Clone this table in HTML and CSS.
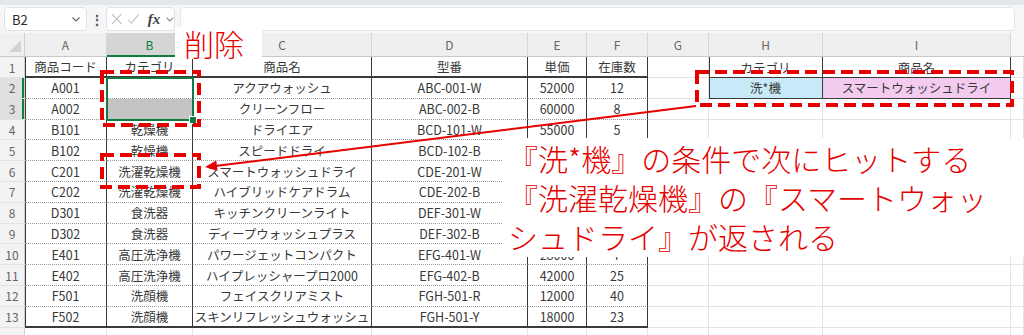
FILE: index.html
```html
<!DOCTYPE html>
<html lang="ja">
<head>
<meta charset="utf-8">
<title>XLOOKUP ワイルドカード</title>
<link rel="stylesheet" href="styles.css">
</head>
<body>
<div class="app">
  <div class="fbar">
    <div class="namebox">
      <span class="ref">B2</span>
      <svg class="chev" width="8" height="5" viewBox="0 0 8 5"><polyline points="0.5,0.5 4,4 7.5,0.5" fill="none" stroke="#666" stroke-width="1.1"/></svg>
    </div>
    <div class="dots">⋮</div>
    <div class="fxbox">
      <svg width="12" height="12" viewBox="0 0 12 12"><path d="M1 1 L11 11 M11 1 L1 11" stroke="#bdbdbd" stroke-width="1.1" fill="none"/></svg>
      <svg width="13" height="12" viewBox="0 0 13 12"><polyline points="1,6.5 4.5,10.5 12,1.5" stroke="#bdbdbd" stroke-width="1.1" fill="none"/></svg>
      <span class="fx">fx</span>
      <svg width="8" height="5" viewBox="0 0 8 5"><polyline points="0.5,0.5 4,4 7.5,0.5" fill="none" stroke="#888" stroke-width="1.1"/></svg>
    </div>
    <div class="finput"></div>
  </div>

  <div class="sheet">
    <div class="corner"><span class="tri"></span></div>
    <div class="ch">A</div><div class="ch sel">B</div><div class="ch">C</div><div class="ch">D</div><div class="ch">E</div><div class="ch">F</div><div class="ch">G</div><div class="ch">H</div><div class="ch">I</div><div class="ch end"></div>

    <div class="rh">1</div>
    <div class="t ta th">商品コード</div><div class="t th">カテゴリ</div><div class="t th">商品名</div><div class="t th">型番</div><div class="t th">単価</div><div class="t th">在庫数</div>
    <div class="c"></div><div class="t ta tb">カテゴリ</div><div class="t tb">商品名</div><div class="c"></div>

    <div class="rh sel">2</div>
    <div class="t ta">A001</div><div class="t"></div><div class="t">アクアウォッシュ</div><div class="t">ABC-001-W</div><div class="t">52000</div><div class="t">12</div>
    <div class="c"></div><div class="t ta tb blue">洗*機</div><div class="t tb pink">スマートウォッシュドライ</div><div class="c"></div>

    <div class="rh sel">3</div>
    <div class="t ta">A002</div><div class="t gray"></div><div class="t">クリーンフロー</div><div class="t">ABC-002-B</div><div class="t">60000</div><div class="t">8</div>
    <div class="c"></div><div class="c"></div><div class="c"></div><div class="c"></div>

    <div class="rh">4</div>
    <div class="t ta">B101</div><div class="t">乾燥機</div><div class="t">ドライエア</div><div class="t">BCD-101-W</div><div class="t">55000</div><div class="t">5</div>
    <div class="c"></div><div class="c"></div><div class="c"></div><div class="c"></div>

    <div class="rh">5</div>
    <div class="t ta">B102</div><div class="t">乾燥機</div><div class="t">スピードドライ</div><div class="t">BCD-102-B</div><div class="t"></div><div class="t"></div>
    <div class="c"></div><div class="c"></div><div class="c"></div><div class="c"></div>

    <div class="rh">6</div>
    <div class="t ta">C201</div><div class="t">洗濯乾燥機</div><div class="t">スマートウォッシュドライ</div><div class="t">CDE-201-W</div><div class="t"></div><div class="t"></div>
    <div class="c"></div><div class="c"></div><div class="c"></div><div class="c"></div>

    <div class="rh">7</div>
    <div class="t ta">C202</div><div class="t">洗濯乾燥機</div><div class="t">ハイブリッドケアドラム</div><div class="t">CDE-202-B</div><div class="t"></div><div class="t"></div>
    <div class="c"></div><div class="c"></div><div class="c"></div><div class="c"></div>

    <div class="rh">8</div>
    <div class="t ta">D301</div><div class="t">食洗器</div><div class="t">キッチンクリーンライト</div><div class="t">DEF-301-W</div><div class="t"></div><div class="t"></div>
    <div class="c"></div><div class="c"></div><div class="c"></div><div class="c"></div>

    <div class="rh">9</div>
    <div class="t ta">D302</div><div class="t">食洗器</div><div class="t">ディープウォッシュプラス</div><div class="t">DEF-302-B</div><div class="t"></div><div class="t"></div>
    <div class="c"></div><div class="c"></div><div class="c"></div><div class="c"></div>

    <div class="rh">10</div>
    <div class="t ta">E401</div><div class="t">高圧洗浄機</div><div class="t">パワージェットコンパクト</div><div class="t">EFG-401-W</div><div class="t">28000</div><div class="t">7</div>
    <div class="c"></div><div class="c"></div><div class="c"></div><div class="c"></div>

    <div class="rh">11</div>
    <div class="t ta">E402</div><div class="t">高圧洗浄機</div><div class="t">ハイプレッシャープロ2000</div><div class="t">EFG-402-B</div><div class="t">42000</div><div class="t">25</div>
    <div class="c"></div><div class="c"></div><div class="c"></div><div class="c"></div>

    <div class="rh">12</div>
    <div class="t ta">F501</div><div class="t">洗顔機</div><div class="t">フェイスクリアミスト</div><div class="t">FGH-501-R</div><div class="t">12000</div><div class="t">40</div>
    <div class="c"></div><div class="c"></div><div class="c"></div><div class="c"></div>

    <div class="rh">13</div>
    <div class="t ta tl">F502</div><div class="t tl">洗顔機</div><div class="t tl">スキンリフレッシュウォッシュ</div><div class="t tl">FGH-501-Y</div><div class="t tl">18000</div><div class="t tl">23</div>
    <div class="c"></div><div class="c"></div><div class="c"></div><div class="c"></div>

    <div class="rh"></div>
    <div class="c"></div><div class="c"></div><div class="c"></div><div class="c"></div><div class="c"></div><div class="c"></div>
    <div class="c"></div><div class="c"></div><div class="c"></div><div class="c"></div>
  </div>

  <div class="selbox"><span class="handle"></span></div>

  <div class="tag">削除</div>

  <div class="note">
    <p>『洗*機』の条件で次にヒットする</p>
    <p>『洗濯乾燥機』の『スマートウォッ</p>
    <p>シュドライ』が返される</p>
  </div>

  <svg class="marks" width="1024" height="335" viewBox="0 0 1024 335">
    <g fill="none" stroke="#e60000" stroke-width="4" stroke-dasharray="12 6">
      <rect x="102" y="72" width="97" height="53"/>
      <rect x="102" y="155" width="97" height="32"/>
      <rect x="697" y="72" width="315" height="33"/>
    </g>
    <line x1="696" y1="106" x2="215" y2="166" stroke="#e60000" stroke-width="2"/>
    <polygon points="205,167 217.5,171 216.3,160.5" fill="#e60000"/>
  </svg>
</div>
</body>
</html>
```

FILE: styles.css
```css
html, body {
  margin: 0;
  padding: 0;
  background: #ffffff;
}

body {
  width: 1024px;
  height: 335px;
  overflow: hidden;
  font-family: "Noto Sans CJK JP", "Noto Sans", sans-serif;
}

.app {
  position: relative;
  width: 1024px;
  height: 335px;
  overflow: hidden;
}

/* formula bar */
.fbar {
  height: 33px;
  box-sizing: border-box;
  padding: 7px 9px 0 4px;
  display: flex;
  align-items: flex-start;
  background: linear-gradient(#e4e7ea 0, #e4e7ea 5px, #f5f6f7 5px);
}

.namebox {
  width: 83px;
  height: 24px;
  box-sizing: border-box;
  background: #fff;
  border: 1px solid #e2e2e2;
  border-radius: 4px;
  display: flex;
  align-items: center;
  justify-content: space-between;
  padding: 0 6px 0 7px;
}

.ref {
  font-size: 13px;
  color: #2b2b2b;
}

.dots {
  width: 19px;
  height: 24px;
  display: flex;
  align-items: center;
  justify-content: center;
  font-size: 14px;
  color: #555;
  font-weight: bold;
}

.fxbox {
  width: 69px;
  height: 24px;
  box-sizing: border-box;
  background: #fff;
  border: 1px solid #e2e2e2;
  border-radius: 4px;
  display: flex;
  align-items: center;
  gap: 5px;
  padding: 0 0 0 4px;
}

.fx {
  font-family: "Liberation Serif", serif;
  font-style: italic;
  font-weight: bold;
  font-size: 15px;
  color: #444;
  margin: 0 1px 0 3px;
}

.finput {
  flex: 1;
  margin-left: 5px;
  height: 24px;
  background: #fff;
  border: 1px solid #e6e6e6;
  border-radius: 4px;
  box-sizing: border-box;
}

/* sheet grid */
.sheet {
  display: grid;
  grid-template-columns: 25px 82px 86px 179px 156px 59px 61px 61px 114px 188px 13px;
  grid-template-rows: 24px 21px repeat(12, 20.8px) 20px;
}

.corner {
  position: relative;
  background: #f0f0f0;
  border-right: 1px solid #d0d0d0;
  border-bottom: 1px solid #c8c8c8;
  box-sizing: border-box;
}

.tri {
  position: absolute;
  right: 3px;
  bottom: 4px;
  width: 0;
  height: 0;
  border-left: 12px solid transparent;
  border-bottom: 12px solid #d3d3d3;
}

.ch {
  background: #efefef;
  border-right: 1px solid #d6d6d6;
  border-bottom: 1px solid #c8c8c8;
  box-sizing: border-box;
  display: flex;
  align-items: center;
  justify-content: center;
  font-size: 12px;
  color: #666;
}

.ch.sel {
  background: #d5d5d5;
  color: #107c41;
  border-bottom: 2px solid #107c41;
}

.ch.end {
  background: #f7f7f7;
  border-right: none;
}

.rh {
  background: #f3f3f3;
  border-right: 1px solid #cfcfcf;
  border-bottom: 1px solid #e3e3e3;
  box-sizing: border-box;
  display: flex;
  align-items: center;
  justify-content: center;
  font-size: 12px;
  color: #666;
}

.rh.sel {
  background: #e0e0e0;
  box-shadow: inset -2px 0 0 #107c41;
}

.c,
.t {
  border-right: 1px solid #e2e2e2;
  border-bottom: 1px solid #e2e2e2;
  box-sizing: border-box;
  display: flex;
  align-items: center;
  justify-content: center;
  font-size: 12.5px;
  color: #383838;
  white-space: nowrap;
  overflow: hidden;
}

.t {
  border-right: 1px solid #3a3a3a;
  border-bottom: 1px dotted #9a9a9a;
}

.ta {
  box-shadow: inset 1px 0 0 #3a3a3a;
}

.th,
.tl {
  border-bottom: 2px solid #3a3a3a;
}

.tb {
  border-bottom: 1px solid #3a3a3a;
}

.gray {
  background: #c4c4c4;
}

.blue {
  background: #c8e9f7;
}

.pink {
  background: #f2cbef;
}

/* overlays */
.selbox {
  position: absolute;
  left: 106px;
  top: 77px;
  width: 88px;
  height: 44px;
  border: 2px solid #107c41;
  box-sizing: border-box;
}

.handle {
  position: absolute;
  right: -5px;
  bottom: -5px;
  width: 6px;
  height: 6px;
  background: #107c41;
  border: 1px solid #fff;
}

.tag {
  position: absolute;
  left: 175px;
  top: 27px;
  width: 87px;
  height: 32px;
  box-sizing: border-box;
  padding-left: 9px;
  background: #fff;
  color: #e60000;
  font-size: 30px;
  font-weight: 300;
  line-height: 32px;
}

.note {
  position: absolute;
  left: 502px;
  top: 138px;
  width: 522px;
  height: 119px;
  box-sizing: border-box;
  padding: 1px 0 0 6px;
  background: #fff;
  color: #e60000;
  font-size: 30px;
  font-weight: 300;
  line-height: 39px;
}

.note p {
  margin: 0;
  white-space: nowrap;
}

.marks {
  position: absolute;
  left: 0;
  top: 0;
  pointer-events: none;
}
```
